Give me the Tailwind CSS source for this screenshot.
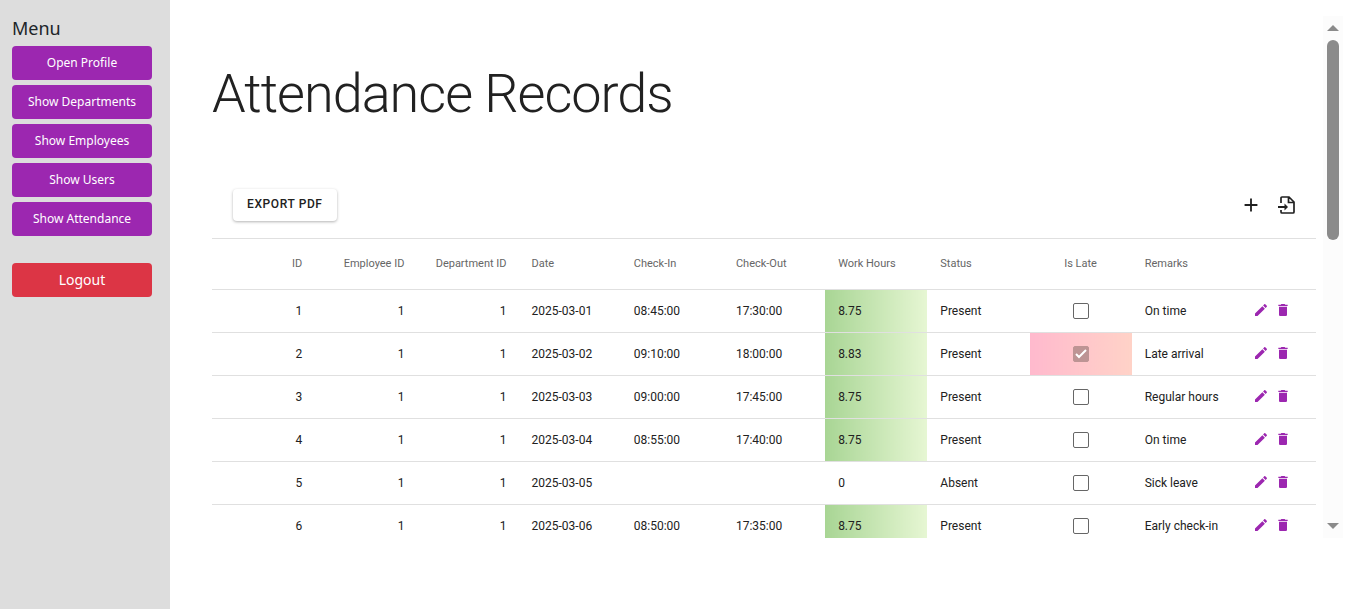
<!DOCTYPE html>
<html lang="en">
<head>
<meta charset="utf-8">
<title>Attendance Records</title>
<script src="https://cdn.jsdelivr.net/npm/@tailwindcss/browser@4"></script>
</head>
<body class="flex h-screen overflow-hidden bg-white font-['Roboto',sans-serif] text-[#212121]">
<svg class="hidden">
  <symbol id="pencil" viewBox="0 0 24 24"><path d="M3 17.25V21h3.75L17.81 9.94l-3.75-3.75L3 17.25zM20.71 7.04c.39-.39.39-1.02 0-1.41l-2.34-2.34c-.39-.39-1.02-.39-1.41 0l-1.83 1.83 3.75 3.75 1.83-1.83z"/></symbol>
  <symbol id="trash" viewBox="0 0 24 24"><path d="M6 19c0 1.100.9 2 2 2h8c1.100 0 2-.9 2-2V7H6v12zM19 4h-3.500l-1-1h-5l-1 1H5v2h14V4z"/></symbol>
</svg>
<nav class="flex w-[170px] shrink-0 flex-col bg-[#dddddd] px-3 pr-[18px] pt-4 font-['Noto_Sans',sans-serif] text-xs text-white">
  <h2 class="mb-[6px] text-lg leading-6 text-[#212529]">Menu</h2>
  <div class="flex flex-col gap-[5px]">
    <button class="h-[34px] rounded bg-[#9c27b0]">Open Profile</button>
    <button class="h-[34px] rounded bg-[#9c27b0]">Show Departments</button>
    <button class="h-[34px] rounded bg-[#9c27b0]">Show Employees</button>
    <button class="h-[34px] rounded bg-[#9c27b0]">Show Users</button>
    <button class="h-[34px] rounded bg-[#9c27b0]">Show Attendance</button>
  </div>
  <button class="mt-[27px] h-[34px] rounded bg-[#dc3545] text-sm">Logout</button>
</nav>
<main class="mr-[14px] mb-[71px] ml-[42px] mt-4 flex min-w-0 grow overflow-hidden">
  <section class="mr-[7px] min-w-0 grow overflow-hidden">
    <h1 class="mt-[45px] text-[54px] leading-[66px] font-light tracking-[-1px]">Attendance Records</h1>
    <div class="mt-[45px] flex h-[66px] items-center justify-between pl-[21px] pr-[19px]">
      <button class="h-8 rounded bg-white px-[14px] pb-[2px] text-xs font-medium tracking-wider shadow-[0_1px_3px_rgba(0,0,0,0.3)]">EXPORT PDF</button>
      <div class="flex items-center gap-[15px]">
        <button aria-label="Add"><svg class="size-[22px]" viewBox="0 0 24 24" fill="currentColor"><path d="M19 13h-6v6h-2v-6H5v-2h6V5h2v6h6v2z"/></svg></button>
        <button aria-label="Export"><svg class="size-5" viewBox="0 0 20 20" fill="none" stroke="currentColor" stroke-width="1.700"><path d="M4 8V3q0-1 1-1h7l5 5v10q0 1-1 1H5q-1 0-1-1v-2M11.500 2v5.500H17"/><path d="M1 12h7" stroke-width="2"/><path d="M7.500 8.500v7L11 12z" fill="currentColor" stroke="none"/></svg></button>
      </div>
    </div>
    <table class="w-full table-fixed border-collapse text-left text-xs">
      <colgroup><col span="10"><col class="w-[82px]"></colgroup>
      <thead>
        <tr class="h-[51px] border-y border-[#e0e0e0] text-[11px] text-[#666666]">
          <th class="px-3 text-right font-normal">ID</th><th class="px-3 text-right font-normal">Employee ID</th><th class="px-3 text-right font-normal whitespace-nowrap">Department ID</th>
          <th class="pl-[13px] font-normal">Date</th><th class="pl-[13px] font-normal">Check-In</th><th class="pl-[13px] font-normal">Check-Out</th><th class="pl-[13px] font-normal">Work Hours</th><th class="pl-[13px] font-normal">Status</th><th class="text-center font-normal">Is Late</th><th class="pl-[13px] font-normal">Remarks</th><th aria-label="Actions"></th>
        </tr>
      </thead>
      <tbody id="rows"></tbody>
    </table>
  </section>
  <div class="flex w-5 shrink-0 flex-col items-center justify-between bg-[#fcfcfc] py-[9px]" aria-hidden="true">
    <div class="flex flex-col items-center gap-[9px]">
      <svg class="h-[6px] w-3" viewBox="0 0 12 6" fill="#8b8b8b"><path d="M0 6 6 0l6 6z"/></svg>
      <div class="h-[200px] w-3 rounded-full bg-[#8b8b8b]"></div>
    </div>
    <svg class="h-[6px] w-3" viewBox="0 0 12 6" fill="#8b8b8b"><path d="M0 0h12L6 6z"/></svg>
  </div>
</main>
<script>
const records = [
  [1, '2025-03-01', '08:45:00', '17:30:00', 8.75, 'Present', false, 'On time'],
  [2, '2025-03-02', '09:10:00', '18:00:00', 8.83, 'Present', true, 'Late arrival'],
  [3, '2025-03-03', '09:00:00', '17:45:00', 8.75, 'Present', false, 'Regular hours'],
  [4, '2025-03-04', '08:55:00', '17:40:00', 8.75, 'Present', false, 'On time'],
  [5, '2025-03-05', '', '', 0, 'Absent', false, 'Sick leave'],
  [6, '2025-03-06', '08:50:00', '17:35:00', 8.75, 'Present', false, 'Early check-in'],
];
document.getElementById('rows').innerHTML = records.map(([id, date, cin, cout, hours, status, late, remarks]) => `
  <tr class="h-[43px] border-b border-[#e0e0e0]">
    <td class="px-3 text-right">${id}</td><td class="px-3 text-right">1</td><td class="px-3 text-right">1</td>
    <td class="pl-[13px]">${date}</td><td class="pl-[13px]">${cin}</td><td class="pl-[13px]">${cout}</td>
    <td class="pl-[13px] ${hours ? 'bg-linear-to-r from-[#a8d594] to-[#e6f6d3]' : ''}">${hours}</td>
    <td class="pl-[13px]">${status}</td>
    <td class="${late ? 'bg-linear-to-r from-[#ffb9cd] to-[#ffd2c7]' : ''}">
      <label class="mx-auto grid size-4 *:col-start-1 *:row-start-1">
        <input type="checkbox" aria-label="Is late" ${late ? 'checked' : ''} class="peer size-4 appearance-none rounded-xs border border-[#666666] bg-white checked:border-[#bd9494] checked:bg-[#bd9494]">
        <svg class="pointer-events-none invisible size-4 peer-checked:visible" viewBox="0 0 16 16" fill="none" stroke="#fff" stroke-width="2"><path d="M3 8l3 3 7-7"/></svg>
      </label>
    </td>
    <td class="pl-[13px]">${remarks}</td>
    <td class="pb-[2px] pl-[19px]"><div class="flex gap-[6px] text-[#9c27b0]">
      <button aria-label="Edit"><svg class="size-4" fill="currentColor"><use href="#pencil"/></svg></button>
      <button aria-label="Delete"><svg class="size-4" fill="currentColor"><use href="#trash"/></svg></button>
    </div></td>
  </tr>`).join('');
</script>
</body>
</html>
